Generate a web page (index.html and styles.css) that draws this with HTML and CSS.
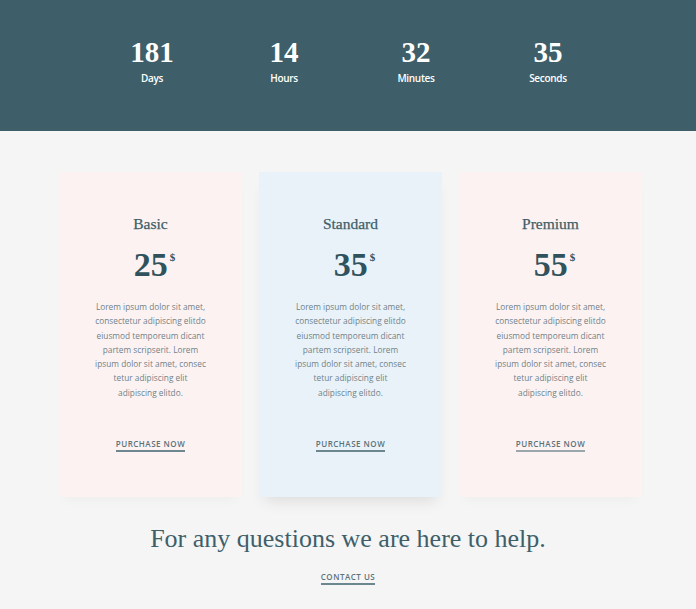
FILE: index.html
```html
<!DOCTYPE html>
<html>
<head>
<meta charset="utf-8">
<link rel="stylesheet" href="styles.css">
</head>
<body>
<header class="countdown">
  <div class="unit"><span class="num">181</span><span class="label">Days</span></div>
  <div class="unit"><span class="num">14</span><span class="label">Hours</span></div>
  <div class="unit"><span class="num">32</span><span class="label">Minutes</span></div>
  <div class="unit"><span class="num">35</span><span class="label">Seconds</span></div>
</header>
<main class="pricing">
  <div class="cards">
    <div class="card pink">
      <h3 class="plan">Basic</h3>
      <div class="price">25<span class="cur">$</span></div>
      <p class="desc">Lorem ipsum dolor sit amet,<br>consectetur adipiscing elitdo<br>eiusmod temporeum dicant<br>partem scripserit. Lorem<br>ipsum dolor sit amet, consec<br>tetur adipiscing elit<br>adipiscing elitdo.</p>
      <a class="link" href="#">Purchase now</a>
    </div>
    <div class="card blue raised">
      <h3 class="plan">Standard</h3>
      <div class="price">35<span class="cur">$</span></div>
      <p class="desc">Lorem ipsum dolor sit amet,<br>consectetur adipiscing elitdo<br>eiusmod temporeum dicant<br>partem scripserit. Lorem<br>ipsum dolor sit amet, consec<br>tetur adipiscing elit<br>adipiscing elitdo.</p>
      <a class="link" href="#">Purchase now</a>
    </div>
    <div class="card pink">
      <h3 class="plan">Premium</h3>
      <div class="price">55<span class="cur">$</span></div>
      <p class="desc">Lorem ipsum dolor sit amet,<br>consectetur adipiscing elitdo<br>eiusmod temporeum dicant<br>partem scripserit. Lorem<br>ipsum dolor sit amet, consec<br>tetur adipiscing elit<br>adipiscing elitdo.</p>
      <a class="link light" href="#">Purchase now</a>
    </div>
  </div>
  <section class="help">
    <h2 class="help-title">For any questions we are here to help.</h2>
    <a class="link" href="#">Contact us</a>
  </section>
</main>
</body>
</html>
```
FILE: styles.css
```css
* { box-sizing: border-box; }
html, body { margin: 0; padding: 0; }
body {
  background: #f5f5f5;
  font-family: "Open Sans", "Liberation Sans", sans-serif;
  color: #3e5f69;
  height: 609px;
  overflow: hidden;
}
.countdown {
  background: #3e5f69;
  height: 131px;
  display: flex;
  justify-content: center;
  padding-top: 36px;
  padding-left: 4px;
}
.unit {
  width: 132px;
  display: flex;
  flex-direction: column;
  align-items: center;
  color: #fff;
}
.num {
  font-family: "Liberation Serif", "DejaVu Serif", serif;
  font-weight: 700;
  font-size: 29px;
  line-height: 32px;
}
.label {
  font-size: 10px;
  font-weight: 600;
  letter-spacing: -0.3px;
  line-height: 14px;
  margin-top: 3px;
}
.pricing {
  padding-top: 41px;
}
.cards {
  display: flex;
  gap: 17px;
  width: 584px;
  margin: 0 auto;
  position: relative;
  left: 3px;
}
.card {
  width: 183px;
  height: 325px;
  display: flex;
  flex-direction: column;
  align-items: center;
  padding-top: 42px;
  box-shadow: 0 8px 12px -6px rgba(0,0,0,0.04);
}
.card.raised { box-shadow: 0 10px 14px -6px rgba(0,0,0,0.10); }
.pink { background: #fdf2f2; }
.blue { background: #eaf2f9; }
.plan {
  margin: 0;
  font-family: "Liberation Serif", "DejaVu Serif", serif;
  font-weight: 400;
  font-size: 15.5px;
  line-height: 20px;
  color: #3e5f69;
  -webkit-text-stroke: 0.25px #3e5f69;
}
.price {
  margin-top: 13px;
  font-family: "Liberation Serif", "DejaVu Serif", serif;
  font-weight: 700;
  font-size: 34px;
  line-height: 36px;
  color: #30525c;
  padding-left: 8px;
}
.cur {
  font-size: 11px;
  line-height: 0;
  position: relative;
  top: -15px;
  margin-left: 2px;
}
.desc {
  margin: 17px 0 0;
  font-size: 8.3px;
  line-height: 14.3px;
  color: #6f8288;
  text-align: center;
}
.link {
  display: inline-block;
  font-size: 8px;
  font-weight: 600;
  letter-spacing: 0.5px;
  text-transform: uppercase;
  text-decoration: none;
  color: #5a737b;
  padding-bottom: 1px;
  border-bottom: 2px solid #6c8790;
  line-height: 11px;
}
.card .link { margin-top: 38px; }
.link.light { border-bottom-color: #9aa8ad; }
.help {
  display: flex;
  flex-direction: column;
  align-items: center;
  padding-top: 24px;
}
.help-title {
  margin: 0;
  font-family: "Liberation Serif", "DejaVu Serif", serif;
  font-weight: 400;
  font-size: 26px;
  line-height: 36px;
  color: #3e5f69;
}
.help .link { margin-top: 14px; }
```
